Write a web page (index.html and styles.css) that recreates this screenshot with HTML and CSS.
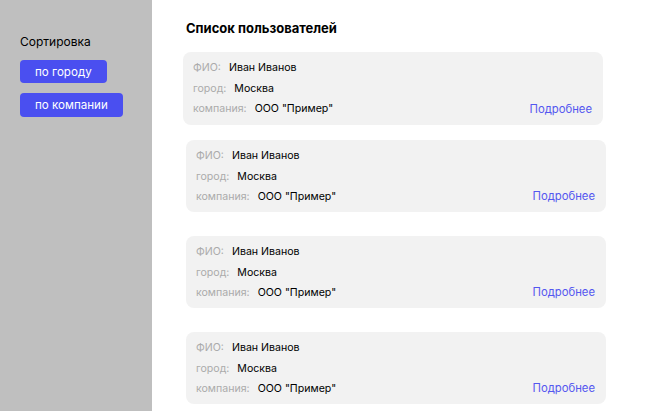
FILE: index.html
```html
<!DOCTYPE html>
<html lang="ru">
<head>
<meta charset="utf-8">
<link rel="stylesheet" href="styles.css">
</head>
<body>
<div class="app">
  <aside class="sidebar">
    <div class="sort-title">Сортировка</div>
    <button class="btn">по городу</button>
    <button class="btn">по компании</button>
  </aside>
  <main class="main">
    <h1 class="title">Список пользователей</h1>
    <div class="list">
      <div class="card card-first">
        <div class="rows">
          <div class="row"><span class="label">ФИО:</span><span class="value">Иван Иванов</span></div>
          <div class="row"><span class="label">город:</span><span class="value">Москва</span></div>
          <div class="row"><span class="label">компания:</span><span class="value">ООО "Пример"</span></div>
        </div>
        <a class="more">Подробнее</a>
      </div>
      <div class="card">
        <div class="rows">
          <div class="row"><span class="label">ФИО:</span><span class="value">Иван Иванов</span></div>
          <div class="row"><span class="label">город:</span><span class="value">Москва</span></div>
          <div class="row"><span class="label">компания:</span><span class="value">ООО "Пример"</span></div>
        </div>
        <a class="more">Подробнее</a>
      </div>
      <div class="card">
        <div class="rows">
          <div class="row"><span class="label">ФИО:</span><span class="value">Иван Иванов</span></div>
          <div class="row"><span class="label">город:</span><span class="value">Москва</span></div>
          <div class="row"><span class="label">компания:</span><span class="value">ООО "Пример"</span></div>
        </div>
        <a class="more">Подробнее</a>
      </div>
      <div class="card">
        <div class="rows">
          <div class="row"><span class="label">ФИО:</span><span class="value">Иван Иванов</span></div>
          <div class="row"><span class="label">город:</span><span class="value">Москва</span></div>
          <div class="row"><span class="label">компания:</span><span class="value">ООО "Пример"</span></div>
        </div>
        <a class="more">Подробнее</a>
      </div>
    </div>
  </main>
</div>
</body>
</html>
```

FILE: styles.css
```css
* { box-sizing: border-box; }
html, body { margin: 0; padding: 0; }
body {
  font-family: Inter, "Noto Sans", sans-serif;
  background: #fff;
  color: #000;
  width: 665px;
  height: 411px;
  overflow: hidden;
}
.app {
  display: flex;
  height: 411px;
}
.sidebar {
  width: 152px;
  flex: none;
  background: #bfbfbf;
  padding: 34px 0 0 20px;
  display: flex;
  flex-direction: column;
  align-items: flex-start;
}
.sort-title {
  font-size: 12px;
  line-height: 16px;
  margin-bottom: 10px;
}
.btn {
  font-family: inherit;
  font-size: 11.6px;
  line-height: 16px;
  color: #fff;
  background: #4a4ff0;
  border: none;
  border-radius: 4px;
  padding: 4px 15px;
  height: 23px;
  margin-bottom: 10px;
}
.btn + .btn { height: 24px; }
.main {
  flex: 1;
  padding: 19px 0 0 34px;
}
.title {
  font-size: 13px;
  font-weight: 700;
  line-height: 18px;
  margin: 0 0 15px 0;
}
.list {
  display: flex;
  flex-direction: column;
  gap: 24px;
}
.card {
  width: 420px;
  height: 72px;
  background: #f2f2f2;
  border-radius: 8px;
  padding: 6px 11px 0 10px;
  display: flex;
  justify-content: space-between;
  align-items: flex-end;
}
.card-first {
  margin-left: -3px;
  height: 73px;
  margin-bottom: -9px;
}
.rows {
  display: flex;
  flex-direction: column;
  align-self: flex-start;
}
.row {
  font-size: 10.6px;
  line-height: 20.5px;
  height: 20.5px;
  white-space: nowrap;
}
.label {
  color: #ababab;
  margin-right: 8px;
}
.value {
  color: #000;
}
.more {
  font-size: 11.3px;
  line-height: 20px;
  color: #5457f0;
  margin-bottom: 6px;
  cursor: pointer;
}
```
